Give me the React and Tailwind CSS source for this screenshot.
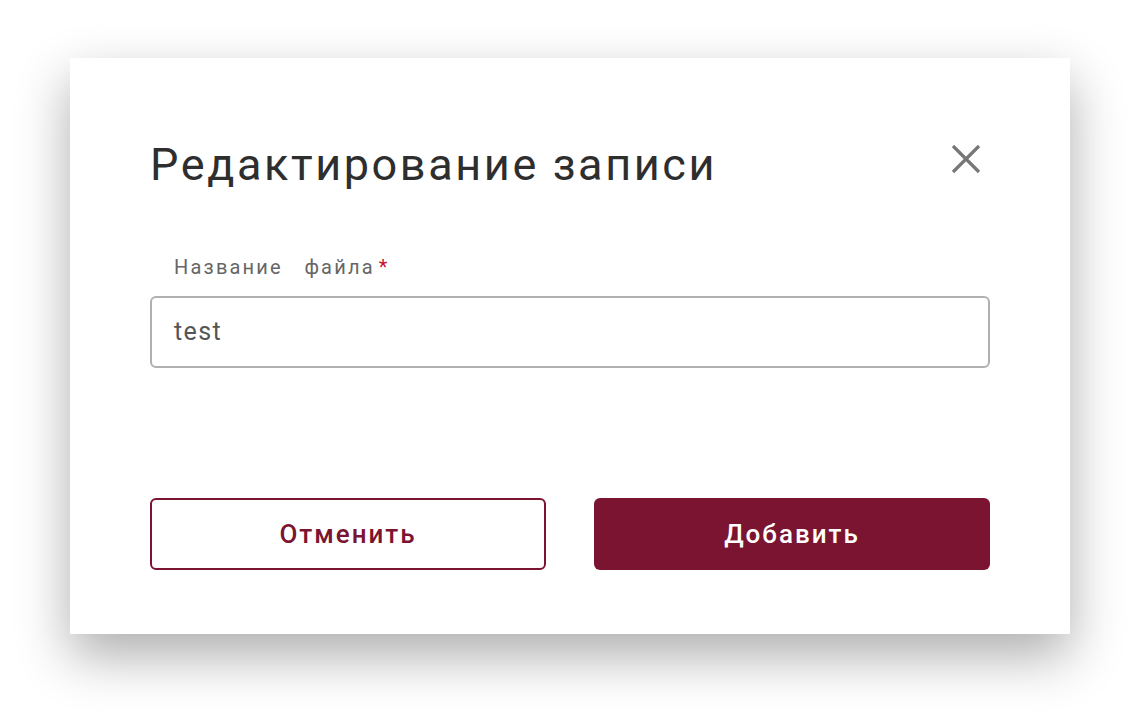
import React from "react";

export default function App() {
  return (
    <div className="min-h-[718px] w-[1140px] bg-white pt-[58px] pl-[70px]" style={{ fontFamily: "Roboto, 'Noto Sans', sans-serif" }}>
      <div className="w-[1000px] h-[576px] bg-white shadow-[0_22px_50px_rgba(0,0,0,0.32)] px-[80px] pt-[81px] pb-[64px] flex flex-col">
        <div className="flex items-start justify-between">
          <h1 className="text-[45px] leading-[52px] text-[#2e2e2e] font-normal tracking-[2.6px]">Редактирование записи</h1>
          <button className="mt-[4px] mr-[8px] w-[32px] h-[32px] flex items-center justify-center">
            <svg width="30" height="30" viewBox="0 0 30 30" fill="none" stroke="#777777" strokeWidth="3.2" strokeLinecap="butt">
              <path d="M2 2 L28 28 M28 2 L2 28" />
            </svg>
          </button>
        </div>
        <div className="mt-[64px] pl-[24px] text-[20px] leading-[24px] text-[#666666] whitespace-pre tracking-[2.2px]">
          {"Название   файла"}<span className="text-[#c8102e] ml-[4px]">*</span>
        </div>
        <div className="mt-[17px] h-[72px] border-2 border-[#b0b0b0] rounded-[6px] flex items-center px-[22px] pb-[1px]">
          <span className="text-[25px] text-[#555555] tracking-[1.4px]">test</span>
        </div>
        <div className="mt-auto flex gap-[48px]">
          <button className="w-[396px] h-[72px] border-2 border-[#7b1430] rounded-[6px] bg-white text-[#7b1430] text-[26px] font-medium tracking-[2px]">Отменить</button>
          <button className="w-[396px] h-[72px] rounded-[6px] bg-[#7b1430] text-white text-[26px] font-medium tracking-[2px]">Добавить</button>
        </div>
      </div>
    </div>
  );
}
